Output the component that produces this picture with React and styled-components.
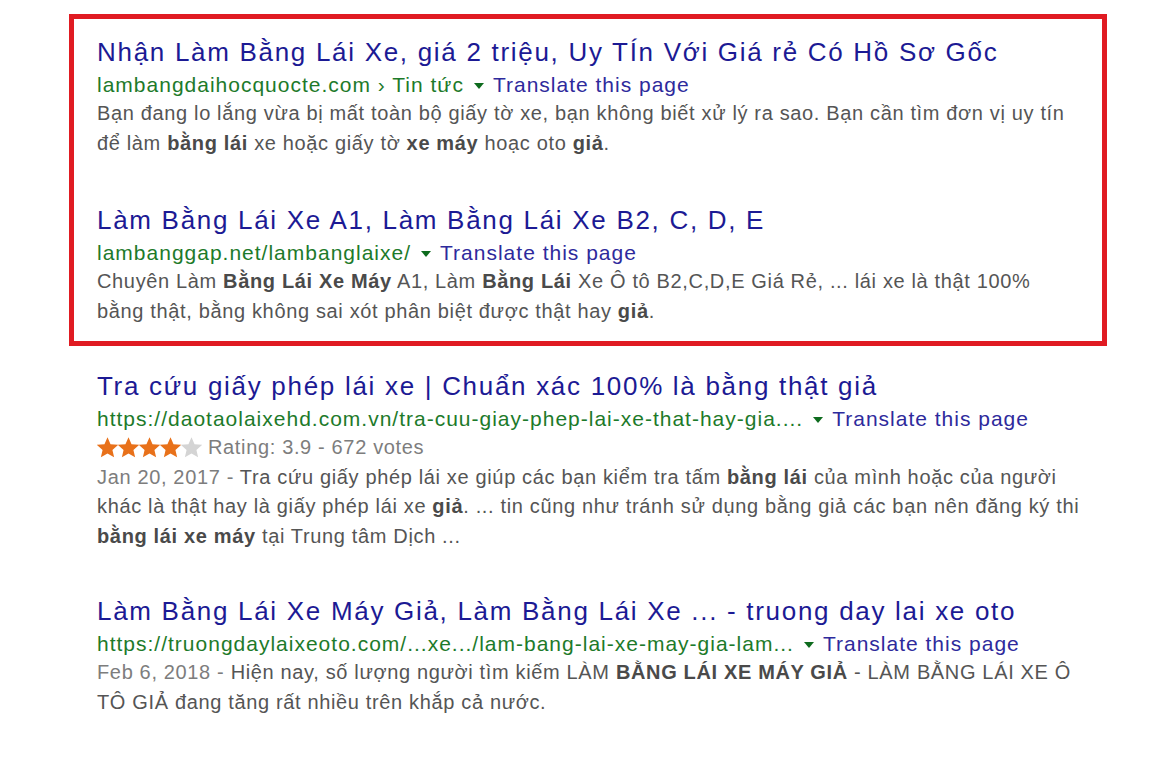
import React from "react";
import styled, { createGlobalStyle } from "styled-components";

const GlobalStyle = createGlobalStyle`
  html, body {
    margin: 0;
    padding: 0;
    background: #fff;
  }
  body {
    font-family: "Liberation Sans", Arial, sans-serif;
  }
`;

const Page = styled.div`
  width: 1155px;
  height: 768px;
  box-sizing: border-box;
  padding: 14px 0 0 69px;
  background: #fff;
  overflow: hidden;
`;

const Highlight = styled.div`
  width: 1038px;
  box-sizing: border-box;
  border: 5px solid #e01b22;
  padding: 14px 0 15px 23px;
  display: flex;
  flex-direction: column;
  gap: 43px;
`;

const Rest = styled.div`
  padding: 21px 0 0 28px;
  display: flex;
  flex-direction: column;
  gap: 41px;
`;

const Result = styled.div`
  display: flex;
  flex-direction: column;
`;

const Title = styled.a`
  font-size: 26px;
  line-height: 38px;
  letter-spacing: 1.7px;
  color: #1c1a94;
  text-decoration: none;
  white-space: nowrap;
`;

const UrlLine = styled.div`
  display: flex;
  align-items: center;
  font-size: 21px;
  line-height: 28px;
  letter-spacing: 1px;
  white-space: nowrap;
`;

const Cite = styled.cite`
  font-style: normal;
  color: #1d7a2a;
`;

const Caret = styled.span`
  display: inline-block;
  width: 0;
  height: 0;
  margin: 2px 9px 0 10px;
  border-left: 5px solid transparent;
  border-right: 5px solid transparent;
  border-top: 6px solid #0e6b1e;
`;

const Translate = styled.a`
  color: #2e2a9c;
  text-decoration: none;
`;

const Snippet = styled.div`
  font-size: 20px;
  line-height: 29.5px;
  letter-spacing: 0.65px;
  color: #555;
  white-space: nowrap;

  b {
    font-weight: bold;
    color: #4a4a4a;
  }
`;

const Meta = styled.span`
  color: #7d7d7d;
`;

const RatingLine = styled.div`
  display: flex;
  align-items: center;
  font-size: 20px;
  line-height: 29.5px;
  letter-spacing: 0.65px;
  color: #7d7d7d;
`;

const Stars = styled.span`
  display: inline-flex;
  margin-right: 6px;
`;

const Star = ({ on }) => (
  <svg width="21" height="21" viewBox="2 2 20 20">
    <path
      d="M12 2.2l2.9 6.6 7.2.7-5.4 4.8 1.6 7.1L12 17.7l-6.3 3.7 1.6-7.1-5.4-4.8 7.2-.7z"
      fill={on ? "#e8711a" : "#d4d4d4"}
    />
  </svg>
);

const UrlRow = ({ children }) => (
  <UrlLine>
    <Cite>{children}</Cite>
    <Caret />
    <Translate href="#">Translate this page</Translate>
  </UrlLine>
);

export default function App() {
  return (
    <>
      <GlobalStyle />
      <Page>
        <Highlight>
          <Result>
            <Title href="#">
              Nhận Làm Bằng Lái Xe, giá 2 triệu, Uy TÍn Với Giá rẻ Có Hồ Sơ Gốc
            </Title>
            <UrlRow>lambangdaihocquocte.com › Tin tức</UrlRow>
            <Snippet>
              Bạn đang lo lắng vừa bị mất toàn bộ giấy tờ xe, bạn không biết xử
              lý ra sao. Bạn cần tìm đơn vị uy tín
              <br />
              để làm <b>bằng lái</b> xe hoặc giấy tờ <b>xe máy</b> hoạc oto{" "}
              <b>giả</b>.
            </Snippet>
          </Result>
          <Result>
            <Title href="#">Làm Bằng Lái Xe A1, Làm Bằng Lái Xe B2, C, D, E</Title>
            <UrlRow>lambanggap.net/lambanglaixe/</UrlRow>
            <Snippet>
              Chuyên Làm <b>Bằng Lái Xe Máy</b> A1, Làm <b>Bằng Lái</b> Xe Ô tô
              B2,C,D,E Giá Rẻ, ... lái xe là thật 100%
              <br />
              bằng thật, bằng không sai xót phân biệt được thật hay <b>giả</b>.
            </Snippet>
          </Result>
        </Highlight>
        <Rest>
          <Result>
            <Title href="#">
              Tra cứu giấy phép lái xe | Chuẩn xác 100% là bằng thật giả
            </Title>
            <UrlRow>
              https://daotaolaixehd.com.vn/tra-cuu-giay-phep-lai-xe-that-hay-gia....
            </UrlRow>
            <RatingLine>
              <Stars>
                <Star on />
                <Star on />
                <Star on />
                <Star on />
                <Star />
              </Stars>
              Rating: 3.9 - 672 votes
            </RatingLine>
            <Snippet>
              <Meta>Jan 20, 2017 - </Meta>Tra cứu giấy phép lái xe giúp các bạn
              kiểm tra tấm <b>bằng lái</b> của mình hoặc của người
              <br />
              khác là thật hay là giấy phép lái xe <b>giả</b>. ... tin cũng như
              tránh sử dụng bằng giả các bạn nên đăng ký thi
              <br />
              <b>bằng lái xe máy</b> tại Trung tâm Dịch ...
            </Snippet>
          </Result>
          <Result>
            <Title href="#">
              Làm Bằng Lái Xe Máy Giả, Làm Bằng Lái Xe ... - truong day lai xe oto
            </Title>
            <UrlRow>
              https://truongdaylaixeoto.com/...xe.../lam-bang-lai-xe-may-gia-lam...
            </UrlRow>
            <Snippet>
              <Meta>Feb 6, 2018 - </Meta>Hiện nay, số lượng người tìm kiếm LÀM{" "}
              <b>BẰNG LÁI XE MÁY GIẢ</b> - LÀM BẰNG LÁI XE Ô
              <br />
              TÔ GIẢ đang tăng rất nhiều trên khắp cả nước.
            </Snippet>
          </Result>
        </Rest>
      </Page>
    </>
  );
}
